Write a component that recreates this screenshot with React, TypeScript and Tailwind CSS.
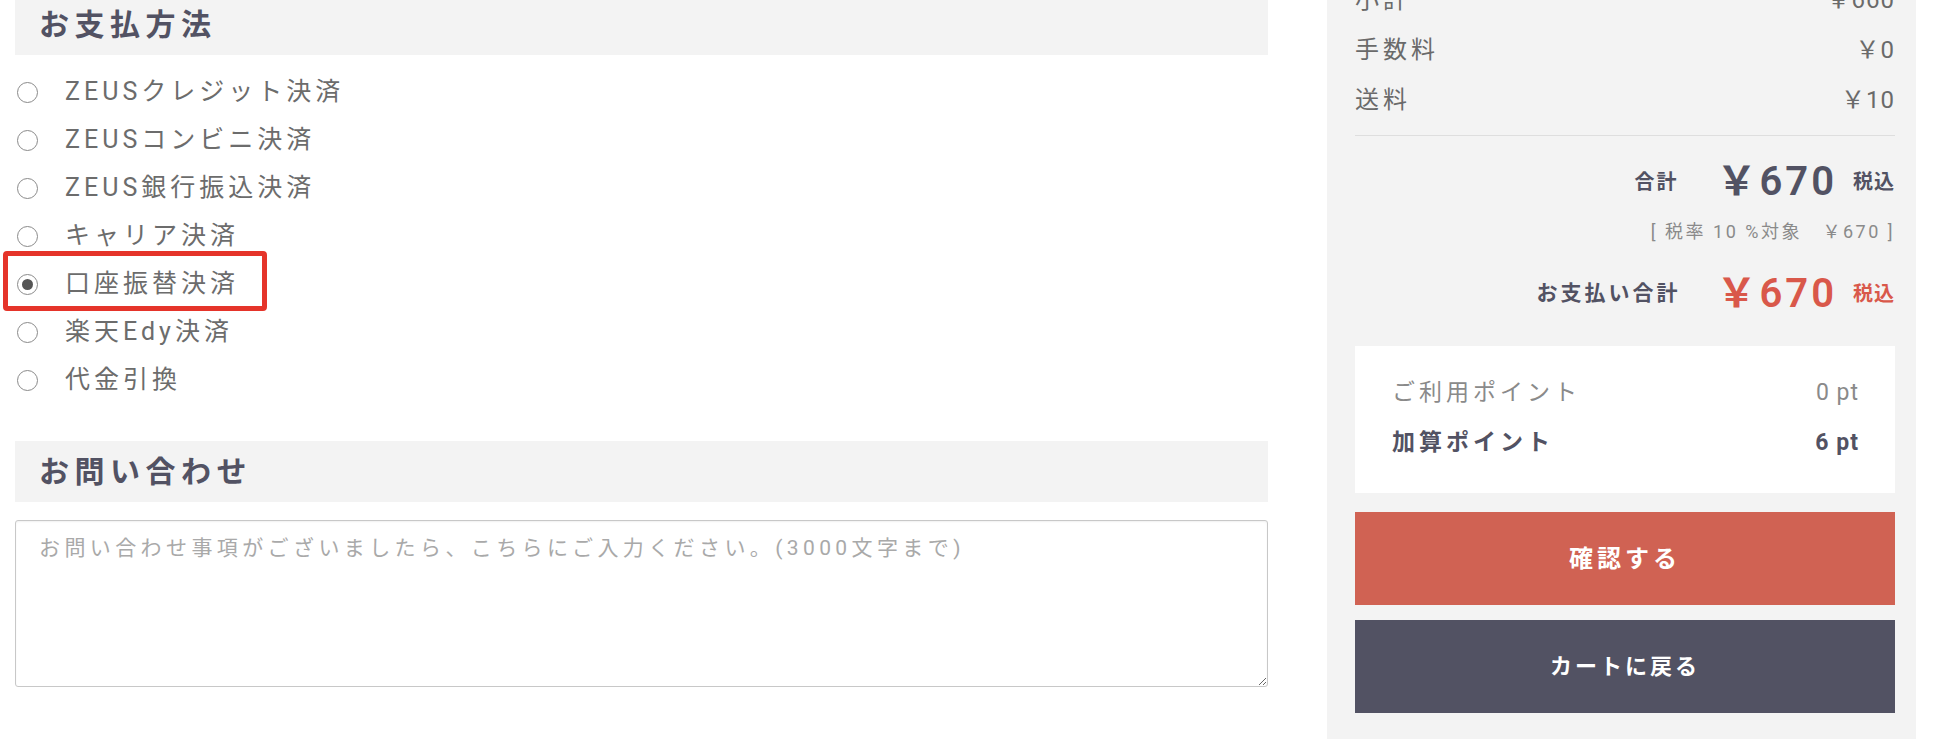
import React from "react";

const PAYMENTS = [
  "ZEUSクレジット決済",
  "ZEUSコンビニ決済",
  "ZEUS銀行振込決済",
  "キャリア決済",
  "口座振替決済",
  "楽天Edy決済",
  "代金引換",
];
const CHECKED = 4;

const SPEC = [
  { label: "小計", value: "￥660" },
  { label: "手数料", value: "￥0" },
  { label: "送料", value: "￥10" },
];

function Radio({ checked }: { checked: boolean }) {
  return (
    <span className="flex h-[21px] w-[21px] shrink-0 items-center justify-center rounded-full border-[1.5px] border-[#8a8a8a] bg-white">
      {checked && <span className="h-[11px] w-[11px] rounded-full bg-[#555]" />}
    </span>
  );
}

function Heading({ children, className = "" }: { children: React.ReactNode; className?: string }) {
  return (
    <div className={`flex h-[61px] items-center bg-[#f3f3f3] pl-6 ${className}`}>
      <h2 className="text-[30px] font-bold tracking-[5.5px] text-[#525263]">{children}</h2>
    </div>
  );
}

export default function App() {
  return (
    <div className="h-[752px] w-[1936px] overflow-hidden bg-white font-[Roboto,'Noto_Sans_CJK_JP',sans-serif]">
      <div className="flex items-start pl-[15px]">
        {/* 左カラム */}
        <div className="w-[1253px]">
          <Heading className="-mt-[6px]">お支払方法</Heading>

          <ul className="mt-[13px]">
            {PAYMENTS.map((p, i) => (
              <li key={p} className="relative flex h-12 items-center">
                <span className="ml-[2px]">
                  <Radio checked={i === CHECKED} />
                </span>
                <span className="ml-[27px] text-[25px] tracking-[4px] text-[#6c6c6c]">{p}</span>
                {i === CHECKED && (
                  <span className="absolute -left-[12px] -top-[9px] h-[60px] w-[264px] rounded-[4px] border-[5px] border-[#e5342a]" />
                )}
              </li>
            ))}
          </ul>

          <Heading className="mt-[37px]">お問い合わせ</Heading>

          <textarea
            className="mt-[18px] block h-[167px] w-full rounded-[3px] border border-[#c8c8c8] px-[23px] pt-[12px] text-[21px] leading-[30px] tracking-[4.4px] text-[#525263] shadow-[inset_0_1px_2px_rgba(0,0,0,0.06)] outline-none placeholder:text-[#a9a9a9]"
            placeholder="お問い合わせ事項がございましたら、こちらにご入力ください。(3000文字まで)"
          />
        </div>

        {/* 右カラム 合計 */}
        <div className="ml-[59px] w-[589px] bg-[#f3f3f3] pb-[26px] pl-[28px] pr-[21px]">
          <div className="-mt-[25px]">
            {SPEC.map((s) => (
              <div key={s.label} className="flex h-[50px] items-center justify-between text-[24px] tracking-[4px] text-[#6a6a6a]">
                <span>{s.label}</span>
                <span className="tracking-[1px]">{s.value}</span>
              </div>
            ))}
          </div>

          <div className="mt-[10px] border-t border-[#dedede]" />

          <div className="mt-[22px] flex h-12 items-center justify-end text-[#525263]">
            <span className="text-[20px] font-bold tracking-[2px]">合計</span>
            <span className="ml-[38px] text-[40px] font-semibold tracking-[3px]">￥670</span>
            <span className="ml-[16px] text-[20px] font-bold tracking-[1px]">税込</span>
          </div>

          <div className="mt-[14px] h-6 text-right text-[18px] leading-6 tracking-[2.5px] text-[#8a8a8a]">
            [ 税率 10 %対象　￥670 ]
          </div>

          <div className="mt-[26px] flex h-12 items-center justify-end">
            <span className="text-[21px] font-bold tracking-[3px] text-[#525263]">お支払い合計</span>
            <span className="ml-[36px] text-[40px] font-semibold tracking-[3px] text-[#d9584a]">￥670</span>
            <span className="ml-[16px] text-[20px] font-bold tracking-[1px] text-[#d9584a]">税込</span>
          </div>

          <div className="mt-[28px] flex flex-col bg-white pb-[25px] pl-[37px] pr-[36px] pt-[22px]">
            <div className="flex h-[50px] items-center justify-between text-[23px] tracking-[4px] text-[#8a8a8a]">
              <span>ご利用ポイント</span>
              <span className="tracking-[1px]">0 pt</span>
            </div>
            <div className="flex h-[50px] items-center justify-between text-[23px] font-bold tracking-[4px] text-[#525263]">
              <span>加算ポイント</span>
              <span className="tracking-[1px]">6 pt</span>
            </div>
          </div>

          <button className="mt-[19px] flex h-[93px] w-full items-center justify-center bg-[#d06253] text-[24px] font-bold tracking-[4px] text-white">
            確認する
          </button>
          <button className="mt-[15px] flex h-[93px] w-full items-center justify-center bg-[#525263] text-[22px] font-bold tracking-[3px] text-white">
            カートに戻る
          </button>
        </div>
      </div>
    </div>
  );
}
